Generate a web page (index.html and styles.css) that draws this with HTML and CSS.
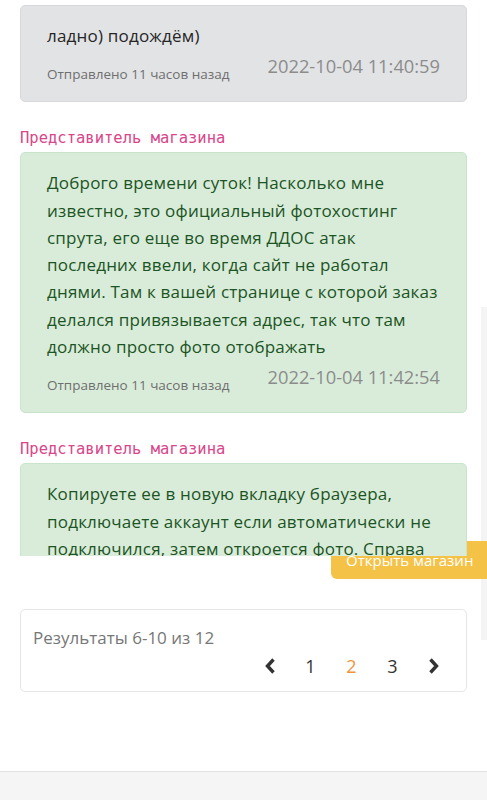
FILE: index.html
```html
<!DOCTYPE html>
<html lang="ru">
<head>
    <meta charset="UTF-8">
    <meta name="viewport" content="width=device-width, initial-scale=1.0">
    <title>Диалог с магазином</title>
    <link rel="stylesheet" href="styles.css">
</head>
<body>
    <div class="page">
        <div class="chat">
            <div class="message message-user">
                <p class="message-text">ладно) подождём)</p>
                <div class="message-meta">
                    <span class="sent">Отправлено 11 часов назад</span>
                    <span class="date">2022-10-04 11:40:59</span>
                </div>
            </div>

            <div class="reply">
                <code class="author">Представитель магазина</code>
                <div class="message message-shop">
                    <p class="message-text">Доброго времени суток! Насколько мне известно, это официальный фотохостинг спрута, его еще во время ДДОС атак последних ввели, когда сайт не работал днями. Там к вашей странице с которой заказ делался привязывается адрес, так что там должно просто фото отображать</p>
                    <div class="message-meta">
                        <span class="sent">Отправлено 11 часов назад</span>
                        <span class="date">2022-10-04 11:42:54</span>
                    </div>
                </div>
            </div>

            <div class="reply">
                <code class="author">Представитель магазина</code>
                <div class="message message-shop">
                    <p class="message-text">Копируете ее в новую вкладку браузера, подключаете аккаунт если автоматически не подключился, затем откроется фото. Справа сверху будет кнопка скачать</p>
                    <div class="message-meta">
                        <span class="sent">Отправлено 11 часов назад</span>
                        <span class="date">2022-10-04 11:43:20</span>
                    </div>
                </div>
            </div>
        </div>

        <a href="#" class="shop-button">Открыть магазин</a>
        <div class="scroll-thumb"></div>

        <div class="pager">
            <div class="pager-info">Результаты 6-10 из 12</div>
            <div class="pager-links">
                <a href="#" class="pager-item">
                    <svg width="12" height="16" viewBox="0 0 12 16"><path d="M9.5 1.5 L3.5 8 L9.5 14.5" fill="none" stroke="#333" stroke-width="3.4"/></svg>
                </a>
                <a href="#" class="pager-item">1</a>
                <a href="#" class="pager-item active">2</a>
                <a href="#" class="pager-item">3</a>
                <a href="#" class="pager-item">
                    <svg width="12" height="16" viewBox="0 0 12 16"><path d="M2.5 1.5 L8.5 8 L2.5 14.5" fill="none" stroke="#333" stroke-width="3.4"/></svg>
                </a>
            </div>
        </div>

        <div class="bottom-bar"></div>
    </div>
</body>
</html>
```

FILE: styles.css
```css
body {
    margin: 0;
    padding: 0;
    font-family: "Open Sans", "Noto Sans", sans-serif;
    background-color: #fff;
    color: #262626;
}
.page {
    position: relative;
    height: 800px;
    overflow: hidden;
}
.chat {
    position: relative;
    z-index: 2;
    box-sizing: border-box;
    height: 556px;
    overflow: hidden;
    padding: 5px 20px 0;
}
.message {
    border: 1px solid #d6d8db;
    border-radius: 5px;
    padding: 16px 26px 18px;
}
.message-user {
    background: #e2e3e5;
}
.message-shop {
    background: #d9ecda;
    border-color: #c9e4cb;
    color: #1c5424;
}
.message-text {
    margin: 0;
    font-size: 17px;
    line-height: 27.3px;
    letter-spacing: 0.2px;
}
.message-meta {
    display: flex;
    justify-content: space-between;
    align-items: flex-start;
    margin-top: 5px;
}
.sent {
    margin-top: 11px;
    font-size: 13.5px;
    line-height: 18px;
    color: #6f6f6f;
}
.date {
    font-size: 18.3px;
    line-height: 24px;
    color: #8c8c8c;
}
.reply {
    margin-top: 26px;
}
.author {
    display: block;
    margin-bottom: 4px;
    font-family: "DejaVu Sans Mono", monospace;
    font-size: 15.5px;
    line-height: 20px;
    color: #d9468a;
}
.shop-button {
    position: absolute;
    z-index: 1;
    top: 541px;
    left: 331px;
    height: 38px;
    padding: 0 30px 0 15px;
    line-height: 38px;
    white-space: nowrap;
    font-size: 15px;
    color: #fff;
    text-decoration: none;
    background: #f3c246;
    border-radius: 6px 0 0 6px;
}
.scroll-thumb {
    position: absolute;
    z-index: 0;
    top: 307px;
    right: 0;
    width: 6px;
    height: 333px;
    background: #f4f4f4;
}
.pager {
    margin: 53px 20px 0;
    padding: 16px 12px 9px;
    border: 1px solid #e6e6e6;
    border-radius: 5px;
}
.pager-info {
    font-size: 17px;
    line-height: 24px;
    color: #777;
}
.pager-links {
    display: flex;
    justify-content: flex-end;
}
.pager-item {
    width: 41px;
    height: 32px;
    display: flex;
    align-items: center;
    justify-content: center;
    font-size: 18px;
    color: #333;
    text-decoration: none;
}
.pager-item.active {
    color: #ee9440;
}
.bottom-bar {
    margin-top: 79px;
    height: 29px;
    border-top: 1px solid #e2e2e2;
    background: #f5f5f5;
}
```
